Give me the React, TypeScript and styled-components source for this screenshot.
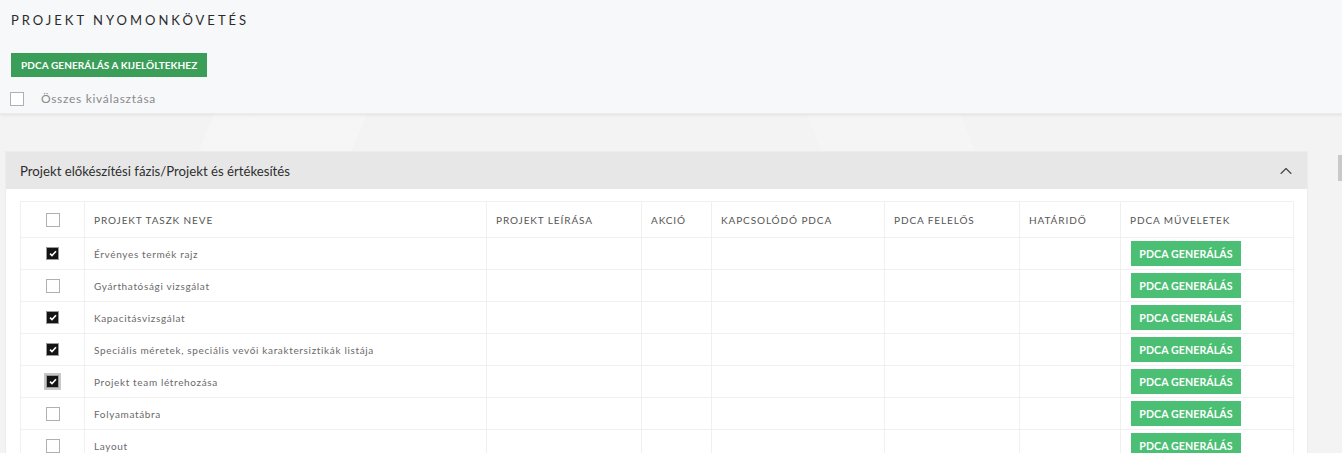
import styled, { createGlobalStyle } from 'styled-components';
import { ChevronUp } from 'lucide-react';

const GlobalStyle = createGlobalStyle`
  html, body {
    margin: 0;
    padding: 0;
    background: #f3f3f3;
    font-family: Lato, "Noto Sans", sans-serif;
    overflow: hidden;
  }
`;

const Page = styled.div`
  min-height: 453px;
  background:
    linear-gradient(112deg, transparent 0 17%, rgba(255,255,255,0.22) 17% 27%, transparent 27% 100%),
    linear-gradient(68deg, transparent 0 62%, rgba(255,255,255,0.2) 62% 72%, transparent 72% 100%),
    #f3f3f3;
`;

const TopBar = styled.div`
  background: #f7f8fa;
  height: 114px;
  box-sizing: border-box;
  padding: 12px 11px 0;
  box-shadow: 0 1px 3px rgba(0, 0, 0, 0.08);
  border-bottom: 1px solid #ececec;
`;

const Title = styled.h1`
  margin: 0;
  font-size: 13px;
  font-weight: 400;
  letter-spacing: 3px;
  color: #2b2b2b;
  line-height: 16px;
`;

const MainButton = styled.button`
  margin-top: 25px;
  height: 24px;
  padding: 0 10px;
  border: 0;
  border-radius: 0;
  background: #3a9e58;
  color: #fff;
  font-family: inherit;
  font-size: 10px;
  font-weight: 700;
  letter-spacing: 0.1px;
  cursor: pointer;
`;

const SelectAll = styled.label`
  display: flex;
  align-items: center;
  gap: 17px;
  margin-top: 14px;
  margin-left: -1px;
  font-size: 12px;
  letter-spacing: 0.7px;
  color: #8a8a8a;
`;

const Box = styled.span<{ $checked?: boolean; $focus?: boolean }>`
  display: inline-flex;
  align-items: center;
  justify-content: center;
  box-sizing: border-box;
  width: ${p => (p.$checked ? 13 : 14)}px;
  height: ${p => (p.$checked ? 13 : 14)}px;
  background: ${p => (p.$checked ? '#141414' : '#fff')};
  border: 1px solid ${p => (p.$checked ? '#9a9a9a' : '#b0b0b0')};
  box-shadow: ${p => (p.$focus ? '0 0 0 2px #c8c8c8' : 'none')};
  vertical-align: middle;
`;

const Check = () => (
  <svg width="8" height="7" viewBox="0 0 8 7">
    <path d="M1 3.6 L3 5.5 L7 1.3" fill="none" stroke="#fff" strokeWidth="1.6" />
  </svg>
);

const Content = styled.div`
  padding: 37px 34px 0 5px;
`;

const Panel = styled.section`
  background: #fff;
  border: 1px solid #ececec;
  border-bottom: 0;
`;

const PanelHeader = styled.div`
  display: flex;
  align-items: center;
  justify-content: space-between;
  height: 37px;
  padding: 0 11px 0 14px;
  background: #e7e7e7;
  font-size: 13.2px;
  color: #2e2e2e;
`;

const PanelBody = styled.div`
  padding: 12px 14px 0 14px;
`;

const Table = styled.table`
  width: 100%;
  border-collapse: collapse;
  table-layout: fixed;
`;

const Th = styled.th<{ $w: number; $center?: boolean }>`
  box-sizing: border-box;
  width: ${p => p.$w}px;
  height: 36px;
  padding: 0 9px;
  border: 1px solid #f0f0f0;
  text-align: ${p => (p.$center ? 'center' : 'left')};
  font-size: 10px;
  font-weight: 400;
  letter-spacing: 0.9px;
  color: #555;
  vertical-align: middle;
  white-space: nowrap;
`;

const Td = styled.td<{ $center?: boolean }>`
  box-sizing: border-box;
  height: 32px;
  padding: 0 9px;
  border: 1px solid #f0f0f0;
  text-align: ${p => (p.$center ? 'center' : 'left')};
  font-size: 10px;
  letter-spacing: 0.65px;
  color: #6a6a6a;
  vertical-align: middle;
  white-space: nowrap;
  overflow: hidden;
`;

const RowButton = styled.button`
  display: block;
  width: 110px;
  height: 25px;
  margin-left: 1px;
  border: 0;
  border-radius: 0;
  background: #4bbf73;
  color: #fff;
  font-family: inherit;
  font-size: 10.6px;
  font-weight: 700;
  letter-spacing: 0.1px;
  cursor: pointer;
`;

const ScrollThumb = styled.div`
  position: fixed;
  right: 0;
  top: 155px;
  width: 4px;
  height: 26px;
  background: #c9c9c9;
`;

const columns = [
  { label: '', w: 64 },
  { label: 'PROJEKT TASZK NEVE', w: 402 },
  { label: 'PROJEKT LEÍRÁSA', w: 155 },
  { label: 'AKCIÓ', w: 70 },
  { label: 'KAPCSOLÓDÓ PDCA', w: 173 },
  { label: 'PDCA FELELŐS', w: 135 },
  { label: 'HATÁRIDŐ', w: 101 },
  { label: 'PDCA MŰVELETEK', w: 173 },
];

const tasks = [
  { name: 'Érvényes termék rajz', checked: true },
  { name: 'Gyárthatósági vizsgálat', checked: false },
  { name: 'Kapacitásvizsgálat', checked: true },
  { name: 'Speciális méretek, speciális vevői karaktersiztikák listája', checked: true },
  { name: 'Projekt team létrehozása', checked: true, focus: true },
  { name: 'Folyamatábra', checked: false },
  { name: 'Layout', checked: false },
];

export default function App() {
  return (
    <Page>
      <GlobalStyle />
      <TopBar>
        <Title>PROJEKT NYOMONKÖVETÉS</Title>
        <MainButton>PDCA GENERÁLÁS A KIJELÖLTEKHEZ</MainButton>
        <SelectAll>
          <Box />
          Összes kiválasztása
        </SelectAll>
      </TopBar>
      <Content>
        <Panel>
          <PanelHeader>
            <span>Projekt előkészítési fázis/Projekt és értékesítés</span>
            <ChevronUp size={20} strokeWidth={1.3} color="#444" />
          </PanelHeader>
          <PanelBody>
            <Table>
              <thead>
                <tr>
                  {columns.map((c, i) => (
                    <Th key={i} $w={c.w} $center={i === 0}>
                      {i === 0 ? <Box /> : c.label}
                    </Th>
                  ))}
                </tr>
              </thead>
              <tbody>
                {tasks.map(t => (
                  <tr key={t.name}>
                    <Td $center>
                      <Box $checked={t.checked} $focus={t.focus}>
                        {t.checked && <Check />}
                      </Box>
                    </Td>
                    <Td>{t.name}</Td>
                    <Td />
                    <Td />
                    <Td />
                    <Td />
                    <Td />
                    <Td>
                      <RowButton>PDCA GENERÁLÁS</RowButton>
                    </Td>
                  </tr>
                ))}
              </tbody>
            </Table>
          </PanelBody>
        </Panel>
      </Content>
      <ScrollThumb />
    </Page>
  );
}
